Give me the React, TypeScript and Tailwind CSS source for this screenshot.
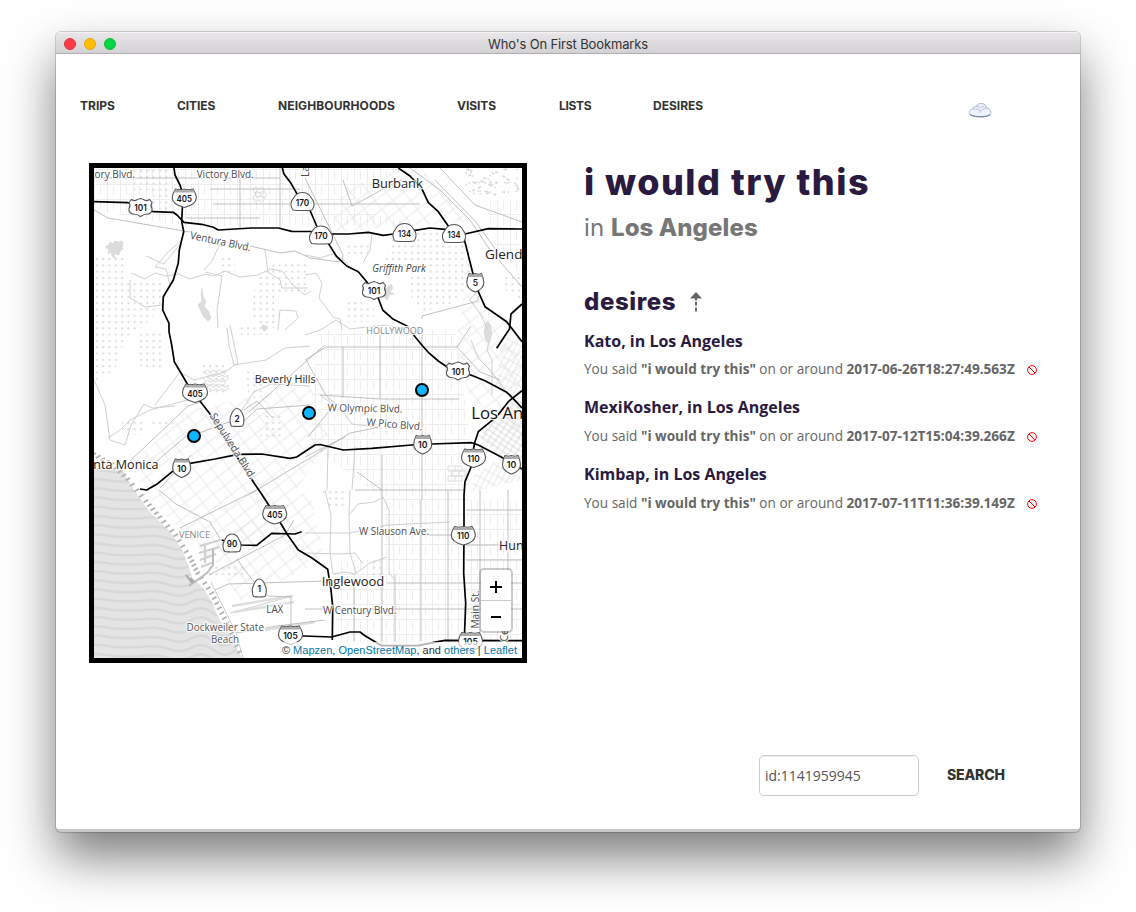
import React from "react";

type ShieldKind = "interstate" | "us" | "state";

const shields: [ShieldKind, string, number, number, number][] = [
  ["us", "101", 140.5, 207.5, 11.5],
  ["interstate", "405", 184.3, 198, 12],
  ["state", "170", 302.5, 202, 11.5],
  ["state", "170", 321, 235.5, 11.5],
  ["state", "134", 404.5, 233, 11.5],
  ["state", "134", 454, 234, 11.5],
  ["interstate", "5", 475.3, 282.5, 8.5],
  ["us", "101", 374, 290.5, 11.5],
  ["us", "101", 458, 371, 11.5],
  ["interstate", "405", 195, 393, 12.5],
  ["state", "2", 237, 418, 7],
  ["interstate", "10", 181.7, 468, 9],
  ["interstate", "10", 422.7, 444.5, 9],
  ["interstate", "110", 473.5, 458, 12],
  ["interstate", "10", 511.5, 464.5, 9],
  ["interstate", "405", 274.7, 514.5, 12],
  ["state", "90", 232, 543.5, 9],
  ["state", "1", 259.3, 588.5, 7],
  ["interstate", "110", 463.3, 535.5, 12],
  ["interstate", "105", 290.5, 635, 12],
  ["interstate", "105", 470.5, 641.5, 12],
];

const highways = [
  "174,168 175,175 180,185 183,195 181.7,221.7 183.7,231.7 179.3,250 178.3,263 173.3,280 163.3,296.7 162.7,310 169,323.3 169,331.7 171.7,345 174.3,361.7 188,385 200,401 210,414 230,446 250,477 261.7,494.3 270,507 281.7,525 287.7,535 298.3,550 312,558 327.7,569.3 331,590 332.7,606.7 332.3,640",
  "94,201.7 128,202.7 153.3,211.7 173.3,212.3 177,215 184,222.3 201.7,224.3 213.3,227.3 218.3,230 251.7,228 278.3,228 291.7,231.3 321,231.5 331.7,234 348.3,234 368.3,232.3 383.3,235.3 393.3,234 415,230.3 430,228 445,229.3 465,234 488.3,228.7 522,229",
  "282.3,168 284,174 291,183.3 296.7,193.3 309,208 316.7,226 328.3,243.3 336.7,256.7 346.7,266 358.3,271.7 366.7,281.7 378.3,298.3 382.7,310 393.3,319.3 407,326 415,336.7 423.3,346.7 428.3,352.3 438.3,361 448.3,367.7 468.3,374 485,380.7 506.7,392.3 513,398.3 522,408",
  "398.3,168 410,176 421.7,188.3 428.3,202.7 438.3,211.7 448.3,226 464,238.3 473.3,275 478.3,291.7 485,306.7 506.7,321.7 522,341.7",
  "522,304 511,314 509.5,329 496.7,348.3",
  "522,390.7 508.3,401.7 496.7,416.7 478.3,431.7 475,441.7 473.3,450 470.7,468 465,481.7 464,495 464,526.7 463.7,573.3 465.7,603.3 464.3,640",
  "140,489 146.7,490 156.7,484.3 172.3,471.7 190,463.3 215,459 238.3,454.3 261.7,454 290,458.3 296.7,457 310,448.3 315,445 320,444.5 343.3,450 371.7,448.3 411.7,445 431.7,444 471.7,442.7 478.3,445 501.7,457.3 522,469",
  "290,635.5 331.7,637 350,632 360,632 365,635.7 381.7,645.7 418,645.7 438,641.7 445,640.3 522,640.7",
  "221.7,540 241.7,545 256.7,545.3 271.7,533.3 295,534 301.7,531.7",
];

const arterials = [
  "94,210 108,218 190,232", "250,246 280,253 295,251 310,258 340,262",
  "305,178 343,255 342,262", "343,180 352,206 400,180 420,190",
  "410,168 440,190 470,220 490,250 522,287", "435,180 475,221 496,250",
  "422,319 422,316 478,301 478,296", "440,168 475,205 522,222",
  "94,178 280,178", "213,204 420,204", "210,189 300,189", "186,218 260,218",
  "305,360 326,347 457,347 471,326", "343,347 343,398", "380,330 380,398", "422,330 422,500",
  "306,360 327,397 336,404", "320,395 380,399 459,399", "457,347 480,372 500,380",
  "249,412 310,358 325,345", "244,410 257,401 273,418", "191,436 226,423 245,420 257,409 310,405",
  "130,461 188,406 201,402", "151,466 191,432", "160,488 191,455",
  "250,494 310,458 350,433 380,427", "305,457 345,437",
  "355,490 382,490", "382,455 382,658", "308,437 330,410",
  "159,490 176,504 210,522 221,540", "180,528 257,490", "209,575 285,535 294,520",
  "237,559 247,573 259,588 268,596 291,597 291,630", "215,590 228,584 325,581",
  "236,633 277,626 325,620", "305,609 522,609", "387,583 522,583",
  "448,490 448,658", "421,500 421,641", "354,580 354,641", "395,575 395,658", "357,472 382,490 464,490",
  "480,490 480,650", "508,490 508,650", "466,545 522,545", "466,510 522,510", "466,560 522,560",
  "280,168 280,228", "240,178 240,228", "420,535 460,535",
];

const trails = [
  "131,273 145,279 155,273 166,276 178,274 190,279 205,274 214,276 225,271 240,277 258,275 270,269 282,271 293,285 305,295 311,291",
  "220,244 212,261 204,270", "205,272 222,276 220,290 217,310 218,328",
  "182,240 168,252 155,267 166,269 170,285", "278,330 280,310 296,311 298,318 285,330",
  "94,380 105,405 110,440 125,445 131,425 144,404 152,408 175,406", "108,438 120,430 130,420 150,410 188,400",
  "230,325 238,363 225,372 194,380 180,372 155,405", "227,328 229,345 234,365 266,360 285,348 310,346",
  "235,420 254,392 271,384 310,386", "265,250 268,272 280,280 282,288 308,288",
  "130,280 130,298 145,307 163,305", "146,256 164,264 181,243",
  "305,255 320,258 333,254 344,260 350,268", "305,275 316,273 322,283 319,298 333,317 340,319 342,330",
  "372,234 370,250 363,263", "305,335 320,330 336,320 350,329 384,325 407,329",
  "490,339 487,350 492,360 492,395", "471,340 478,358 492,372 505,390", "478,290 470,300 481,315 488,330",
  "211,582 236,633 243,658", "232,606 293,596 230,613",
  "325,490 331,515 330,552 333,574 345,572 355,574 370,563 387,557",
  "350,490 349,515 350,553 356,573", "349,515 358,504 374,502 383,497 389,510 389,573 395,580",
  "305,533 350,533 388,525 450,522", "305,553 340,554 355,553 363,564",
  "320,395 330,402 343,412 352,424 382,428", "328,447 327,490", "355,447 352,490",
];

const parks = [
  "94,258 126,258 126,282 163,282 160,308 145,325 125,338 115,370 94,383",
  "134,168 171,168 168,214 154,214 152,190 134,190",
  "218,256 235,256 235,272 218,272", "277,262 310,262 310,293 279,293 279,328 258,328 250,308 258,276",
  "395,230 468,232 472,280 455,303 422,312 411,296 410,270 385,260",
  "347,245 370,245 370,254 347,254", "344,297 374,306 374,322 344,322",
  "203,365 228,365 226,393 203,393", "245,366 267,382 260,398 249,399",
  "122,420 142,420 142,435 122,435", "150,420 178,420 178,428 150,428",
  "264,416 284,416 281,440 260,437", "322,490 345,490 345,508 328,508",
  "207,564 248,564 244,576 208,576", "370,560 385,560 385,579 370,579",
  "140,332 165,332 165,369 138,366", "505,275 522,275 522,302 505,290", "240,325 270,325 270,335 240,335",
];

interface MapLabel {
  t: string; x: number; y: number; s: number; w?: number; c?: string; r?: number; i?: boolean;
}
const labels: MapLabel[] = [
  { t: "tory Blvd.", x: 91, y: 177.5, s: 10.5, w: 44 },
  { t: "Victory Blvd.", x: 196.7, y: 177.5, s: 10.5, w: 57 },
  { t: "La", x: 308.5, y: 177, s: 10.5, r: -90 },
  { t: "Ventura Blvd.", x: 189.5, y: 238.5, s: 10.5, w: 62, r: 12 },
  { t: "Burbank", x: 371.7, y: 188, s: 13, w: 51, c: "#222" },
  { t: "Glendale", x: 485, y: 259, s: 13, w: 56, c: "#222" },
  { t: "Griffith Park", x: 372.3, y: 272, s: 10, w: 53.5, c: "#444", i: true },
  { t: "HOLLYWOOD", x: 366.3, y: 334, s: 9, w: 57, c: "#888" },
  { t: "Beverly Hills", x: 254.7, y: 383, s: 11, w: 61, c: "#222" },
  { t: "W Olympic Blvd.", x: 327.5, y: 411.3, s: 10.5, w: 75, r: 1 },
  { t: "W Pico Blvd.", x: 366.3, y: 425.5, s: 10.5, w: 56, r: 5 },
  { t: "Los Angeles", x: 471.3, y: 418.5, s: 16, w: 92, c: "#111" },
  { t: "Santa Monica", x: 79.5, y: 469, s: 12.5, w: 79, c: "#222" },
  { t: "Sepulveda Blvd.", x: 209.5, y: 416, s: 10.5, w: 76, r: 57.5 },
  { t: "VENICE", x: 179, y: 538, s: 9, w: 31, c: "#888" },
  { t: "Dockweiler State", x: 186.5, y: 631, s: 10, w: 77.5, c: "#555" },
  { t: "Beach", x: 211, y: 643, s: 10, w: 28, c: "#555" },
  { t: "LAX", x: 266.3, y: 612.5, s: 10, w: 17 },
  { t: "W Slauson Ave.", x: 359, y: 535, s: 10.5, w: 70 },
  { t: "Inglewood", x: 321.7, y: 585.5, s: 12.5, w: 62.5, c: "#222" },
  { t: "W Century Blvd.", x: 323, y: 613.5, s: 10.5, w: 73.5 },
  { t: "Huntington Park", x: 499, y: 549.5, s: 12.5, c: "#222" },
  { t: "Main St.", x: 479, y: 628.5, s: 10.5, w: 38, r: -90 },
  { t: "Ce", x: 508, y: 641.5, s: 10.5, r: -90 },
];

const WATER =
  "M94,468 L122,470 L128,480 L134,490 L148,510 L160,522 L172,534 L182,550 L188,564 L192,577 L203,588 L211,600 L218,617 L225,628 L232,638 L242,658 L94,658 Z";

const waves = Array.from({ length: 30 }, (_, k) => {
  const y = 442 + k * 9.2;
  return `M60,${y} q10,7 22,3 t22,-2 t22,2 t22,-1 t22,3 t22,-2 t22,3 t22,-1`;
});

const shore: [number, number][] = [
  [94, 453], [112, 463], [128, 478], [146, 500], [160, 516], [176, 534], [190, 556], [198, 572], [212, 592], [222, 612], [232, 632], [242, 657],
];

function Shield({ kind, label, x, y, w }: { kind: ShieldKind; label: string; x: number; y: number; w: number }) {
  const d =
    kind === "interstate"
      ? `M${-w * 0.72},-9 Q${-w * 0.35},-7.5 0,-9 Q${w * 0.35},-7.5 ${w * 0.72},-9 Q${w},-4 ${w},0 C${w},5 ${w * 0.5},8 0,9.5 C${-w * 0.5},8 ${-w},5 ${-w},0 Q${-w},-4 ${-w * 0.72},-9 Z`
      : kind === "us"
        ? "M-9,-8 Q-6,-6 -4,-7.5 Q-2,-8.5 0,-9 Q2,-8.5 4,-7.5 Q6,-6 9,-8 L11.5,-5 Q9.5,-2 11.5,1 Q12,5 8,6.5 Q4,6 0,9 Q-4,6 -8,6.5 Q-12,5 -11.5,1 Q-9.5,-2 -11.5,-5 Z"
        : `M0,-9.5 C${w * 0.6},-9.5 ${w * 0.7},-5 ${w * 0.95},-1 Q${w * 1.1},4 ${w * 0.82},8 Q0,9 ${-w * 0.82},8 Q${-w * 1.1},4 ${-w * 0.95},-1 C${-w * 0.7},-5 ${-w * 0.6},-9.5 0,-9.5 Z`;
  const spans: Record<string, number> = { "405": 15.5, "10": 9.5, "90": 10.5, "134": 13, "170": 13.5, "110": 12.5, "105": 14.5, "101": 12.5 };
  return (
    <g transform={`translate(${x} ${y})`}>
      <path d={d} fill="#fff" stroke="#555" strokeWidth={1.1} />
      {kind === "interstate" && (
        <path d={`M${-w * 0.7},-8.6 Q${-w * 0.35},-7 0,-8.6 Q${w * 0.35},-7 ${w * 0.7},-8.6 L${w * 0.87},-5.6 H${-w * 0.87} Z`} fill="#aaa" />
      )}
      <text x={0} y={3.7} textAnchor="middle" fontSize={8.4} fontWeight={600} fill="#111" fontFamily="Inter, sans-serif" textLength={spans[label]} lengthAdjust="spacingAndGlyphs">
        {label}
      </text>
    </g>
  );
}

function CityMap() {
  return (
    <svg viewBox="94 168 428 490" className="block h-[490px] w-[428px]" fontFamily="'Open Sans', 'Noto Sans', sans-serif">
      <defs>
        <pattern id="dots" x="94" y="168" width="6.3" height="6.3" patternUnits="userSpaceOnUse">
          <rect x="2" y="2" width="1.8" height="1.8" fill="#d6d6d6" />
        </pattern>
        <pattern id="blocks" width="13" height="15" patternUnits="userSpaceOnUse">
          <path d="M0,4.5H13M3.5,0V15M9.5,6V15" stroke="#eee" strokeWidth="1" fill="none" />
        </pattern>
        <pattern id="slant" width="14" height="11" patternUnits="userSpaceOnUse" patternTransform="rotate(-38)">
          <path d="M0,4H14M4,0V11" stroke="#e4e4e4" strokeWidth=".8" fill="none" />
        </pattern>
        <pattern id="downtown" width="5" height="6" patternUnits="userSpaceOnUse" patternTransform="rotate(-56)">
          <path d="M0,3H5M2,0V6" stroke="#c4c4c4" strokeWidth=".6" fill="none" />
        </pattern>
        <pattern id="eastside" width="9" height="5" patternUnits="userSpaceOnUse" patternTransform="rotate(-62)">
          <path d="M0,3H9M2,0V5" stroke="#dedede" strokeWidth=".7" fill="none" />
        </pattern>
        <clipPath id="sea"><path d={WATER} /></clipPath>
      </defs>
      <rect x="94" y="168" width="428" height="490" fill="#fff" />
      <path d="M94,168H400L345,206L420,226H184L94,210Z" fill="url(#blocks)" />
      <path d="M318,330H455L470,440L464,658H380L385,500L330,460L310,440Z" fill="url(#blocks)" />
      <path d="M464,500H522V658H464Z M335,560H464V658H335Z M485,200H522V280L496,250Z" fill="url(#blocks)" />
      <path d="M130,465L190,410L310,385L330,440L260,545L210,560L150,500Z" fill="url(#slant)" />
      <path d="M343,190L400,168H420L475,222L330,232Z M205,545L310,490L325,560L240,600Z M465,290L522,330V440L470,400L455,345Z" fill="url(#slant)" />
      <path d="M496,412L522,396V462L500,455L478,436Z" fill="url(#downtown)" />
      <path d="M506,330L522,345V395L495,385Z M475,475L500,458L522,470V480L470,492Z" fill="url(#eastside)" />
      {parks.map((p) => <polygon key={p} points={p} fill="url(#dots)" />)}
      <g fill="#dcdcdc" stroke="#d0d0d0" strokeWidth=".5">
        <path d="M106,246l3-1 1-3 3 2 2-3 3 1 4-1 1 3-1 3 1 2-3 2-1 4-4-1-1 1 2 4-4-3-1-4-3 2 1-5-3-1z" />
        <path d="M202,288l1,8 3,6-2,4 5,6 2,6-3,3-5-5-3-7-2-4 4-4-1-6z" />
        <path d="M379,290l5-4 2,3 5-5 2,4-3,4 4,2-5,1-2,5-3-4-5,1z" />
        <path d="M487,322l3,2 2,10-3,9-3-2-2-8 1-7z" />
        <path d="M262,325l5 1-2,5-2-1z" />
      </g>
      <g fill="none" stroke="#ddd" strokeWidth="1">
        {[0, 1, 2, 3].map((r) => <path key={r} d={`M${204 + (r % 2) * 3},${372 + r * 5}l3-2 3,2 3-2 3,2 3-2 3,2 3-2v4l-3,2-3-2-3,2-3-2-3,2-3-2z`} />)}
        {[0, 1, 2].map((r) => <path key={r} d={`M${253 + (r % 2) * 2},${189 + r * 4}l2-2 3,2 3-2 3,2v3l-3,2-3-2-3,2z`} />)}
        <path d="M448,466h14v5h-14zM452,471h14v5h-14zM448,476h14v5h-14zM455,466v5M459,471v5M455,476v5" />
      </g>
      <g fill="#d9d9d9">
        {Array.from({ length: 60 }, (_, k) => {
          const px = 466 + ((k * k * 7 + k * 31) % 53);
          const py = 169 + ((k * k * 5 + k * 17) % 27);
          return <rect key={k} x={px} y={py} width={k % 3 ? 1.5 : 3} height="1.6" transform={`rotate(${k % 2 ? 30 : -20} ${px} ${py})`} />;
        })}
      </g>
      <path d={WATER} fill="#e4e4e4" />
      <g clipPath="url(#sea)" fill="none" stroke="#d8d8d8" strokeWidth="2.4">
        {waves.map((w) => <path key={w} d={w} />)}
      </g>
      <g stroke="#b4b4b4" strokeWidth="2">
        {shore.slice(0, -1).flatMap(([x, y], k) =>
          [0, 0.25, 0.5, 0.75].map((t) => {
            const px = x + (shore[k + 1][0] - x) * t;
            const py = y + (shore[k + 1][1] - y) * t;
            return <path key={`${k}-${t}`} d={`M${px - 2.5},${py + 2.5}l4.5,-2.6`} />;
          }),
        )}
      </g>
      <path d="M200,546l20-6M199,553l20-6M200,560l16-6M201,567l13-5M205,545v18" stroke="#d0d0d0" strokeWidth="2.2" fill="none" />
      <path d="M189,586l18-13 6-8v-16" stroke="#bdbdbd" strokeWidth="2" fill="none" />
      <path d="M190,578l4,4M186,575l6,8" stroke="#aaa" strokeWidth="2" />
      <g fill="none" stroke="#d0d0d0" strokeWidth="1">
        {trails.map((p) => <polyline key={p} points={p} />)}
      </g>
      <path d="M232,606l60-10M234,612l60-10M265,630l50-8" stroke="#dedede" strokeWidth="2.5" fill="none" />
      <g fill="none" stroke="#b9b9b9" strokeWidth=".9">
        {arterials.map((p) => <polyline key={p} points={p} />)}
      </g>
      <g fill="none" stroke="#000" strokeWidth="1.7" strokeLinejoin="round">
        {highways.map((p) => <polyline key={p} points={p} />)}
      </g>
      {shields.map(([kind, label, x, y, w]) => <Shield key={`${x}-${y}`} kind={kind} label={label} x={x} y={y} w={w} />)}
      {labels.map((l) => (
        <text
          key={l.t}
          x={l.x}
          y={l.y}
          fontSize={l.s}
          fill={l.c ?? "#4c4c4c"}
          fontStyle={l.i ? "italic" : "normal"}
          textLength={l.w}
          lengthAdjust="spacingAndGlyphs"
          stroke="#fff"
          strokeOpacity=".85"
          strokeWidth="2.4"
          paintOrder="stroke"
          transform={l.r ? `rotate(${l.r} ${l.x} ${l.y})` : undefined}
        >
          {l.t}
        </text>
      ))}
      <g fill="#0cb7ff" stroke="#000" strokeWidth="2">
        <circle cx="194" cy="436" r="6" />
        <circle cx="309" cy="413" r="6" />
        <circle cx="422" cy="390" r="6" />
      </g>
    </svg>
  );
}

const nav = [
  ["TRIPS", "w-[97px] tracking-[0px]"],
  ["CITIES", "w-[101px] tracking-[-0.1px]"],
  ["NEIGHBOURHOODS", "w-[179px] tracking-[0.1px]"],
  ["VISITS", "w-[102px] tracking-[-0.05px]"],
  ["LISTS", "w-[94px] tracking-[-0.3px]"],
  ["DESIRES", "w-[60px] tracking-[0px]"],
];

const desires = [
  ["Kato, in Los Angeles", "2017-06-26T18:27:49.563Z"],
  ["MexiKosher, in Los Angeles", "2017-07-12T15:04:39.266Z"],
  ["Kimbap, in Los Angeles", "2017-07-11T11:36:39.149Z"],
];

function Cloud() {
  return (
    <svg viewBox="0 0 24 16" className="ml-auto mr-[88px] mt-[10px] block h-4 w-6" fill="none">
      <path d="M4.600 6.800C5.400 5 6.900 4.400 8.400 4.200 9.300 2.300 11.300 1.500 13.200 1.500c2.700 0 4.700 1.300 5 4.200 2.700.5 4.600 2.400 4.600 4.700 0 3.200-3.700 4.400-10.800 4.400S1.300 13.600 1.300 10.600c0-1.800 1.300-3.100 3.300-3.800Z" fill="#eef2fc" stroke="#a9b1c9" strokeWidth="1" />
      <path d="M2 12.400c2 1.800 6 2.300 10.200 2.300s8.200-.5 9.900-2.400" stroke="#7884a5" strokeWidth="1.200" />
      <path d="M5 7.200c3-.9 6 0 7.600 2.200M8.500 4.500c2 0 3 .6 3.400 1.600M18.500 6.200c-3 .3-5.600 1.800-7 4.600M13 5.200c1-.8 2.400-.9 3.400-.4" stroke="#b4bdd8" strokeWidth="1" />
    </svg>
  );
}

export default function App() {
  return (
    <div className="h-[912px] w-[1136px] overflow-hidden bg-white px-14 pt-8 font-['Open_Sans','Noto_Sans',sans-serif]">
      <div className="flex h-[800px] w-[1024px] flex-col overflow-hidden rounded-[5px] border-b-[3px] border-[#c6c8c7] bg-white shadow-[0_25px_50px_rgba(0,0,0,0.52),0_0_0_1px_rgba(0,0,0,0.17)]">
        <header className="grid h-[22px] shrink-0 grid-cols-[1fr_auto_1fr] items-center border-b border-[#b1afb1] border-t border-t-[#f4f3f4] bg-linear-to-b from-[#e8e6e8] to-[#d3d1d3] px-2">
          <div className="flex gap-2">
            <span className="size-3 rounded-full border border-[#e0343c] bg-[#ff3b47]" />
            <span className="size-3 rounded-full border border-[#e5a50c] bg-[#ffbd05]" />
            <span className="size-3 rounded-full border border-[#0fbc38] bg-[#00d742]" />
          </div>
          <h1 className="pt-px font-['Inter',sans-serif] text-[13px] leading-5 tracking-[-0.14px] text-[#333]">Who's On First Bookmarks</h1>
        </header>

        <nav className="flex h-[109px] shrink-0 pl-6 pt-[38px]">
          {nav.map(([label, cls]) => (
            <a key={label} className={`${cls} block pt-1 font-['Inter',sans-serif] text-[12px] font-bold leading-5 text-[#333]`}>{label}</a>
          ))}
          <Cloud />
        </nav>

        <main className="flex h-[500px] shrink-0 pl-[33px]">
          <div className="relative h-[500px] w-[438px] shrink-0 overflow-hidden border-[5px] border-black">
            <CityMap />
            <div className="absolute bottom-[25px] right-[9px] w-[34px] rounded-[5px] border-2 border-black/20 bg-white bg-clip-padding">
              <button className="flex h-[31px] w-full items-center justify-center border-b border-[#ccc] pt-[3px]">
                <svg viewBox="0 0 12 12" className="size-3" stroke="#000" strokeWidth="2"><path d="M0 6h12M6 0v12" /></svg>
              </button>
              <button className="flex h-[30px] w-full items-center justify-center pt-px">
                <svg viewBox="0 0 12 12" className="size-3" stroke="#000" strokeWidth="2"><path d="M1 6h10" /></svg>
              </button>
            </div>
            <div className="absolute bottom-0 right-0 h-4 whitespace-nowrap bg-white/70 px-[5px] font-['Liberation_Sans',sans-serif] text-[11px] leading-4 tracking-[0.02px] text-[#333]">
              © <span className="text-[#0078a8]">Mapzen</span>, <span className="text-[#0078a8]">OpenStreetMap</span>, and <span className="text-[#0078a8]">others</span> | <span className="text-[#0078a8]">Leaflet</span>
            </div>
          </div>

          <section className="ml-[57px] flex flex-col whitespace-nowrap">
            <h2 className="font-['Inter',sans-serif] text-[36px] font-extrabold leading-[38px] tracking-[1.5px] text-[#2b1a40]">i would try this</h2>
            <h3 className="mt-[11px] font-['Inter',sans-serif] text-[24px] leading-8 tracking-[0.08px] text-[#777]">
              in <strong className="font-extrabold">Los Angeles</strong>
            </h3>
            <div className="mt-[41px] flex items-center">
              <h3 className="pt-px font-['Inter',sans-serif] text-[24px] font-extrabold leading-8 tracking-[0.6px] text-[#2b1a40]">desires</h3>
              <svg viewBox="0 0 12 20" className="ml-[14px] h-5 w-3" fill="#666">
                <path d="M6 0 12 6.500H0Z" />
                <path d="M5 6h2v2.500H5ZM5 10h2v3.500H5ZM5 15.500h2v4H5Z" />
              </svg>
            </div>
            <ul className="mt-[10.600px]">
              {desires.map(([place, when]) => (
                <li key={place} className="h-[66.800px]">
                  <h4 className="text-[16px] font-bold leading-6 text-[#2b1a40]">{place}</h4>
                  <p className="mt-[5.400px] flex items-center text-[13.600px] leading-[22px] text-[#666]">
                    <span>You said <b>"i would try this"</b> on or around <b>{when}</b></span>
                    <svg viewBox="0 0 10 10" className="ml-3 mt-[2px] size-[10px]" fill="none" stroke="#f00" strokeWidth="1">
                      <circle cx="5" cy="5" r="4.400" />
                      <path d="m2 2 6 6" />
                    </svg>
                  </p>
                </li>
              ))}
            </ul>
          </section>
        </main>

        <form className="flex items-center pl-[703px] pt-[92px]">
          <input readOnly value="id:1141959945" className="h-[41px] w-[160px] rounded-[5px] border border-[#ccc] px-[5px] text-[14px] text-[#555] shadow-[inset_0_1px_1px_rgba(0,0,0,0.07)] outline-none" />
          <button type="button" className="ml-7 pb-[2px] font-['Inter',sans-serif] text-[14px] font-extrabold tracking-[-0.15px] text-[#333]">SEARCH</button>
        </form>
      </div>
    </div>
  );
}
